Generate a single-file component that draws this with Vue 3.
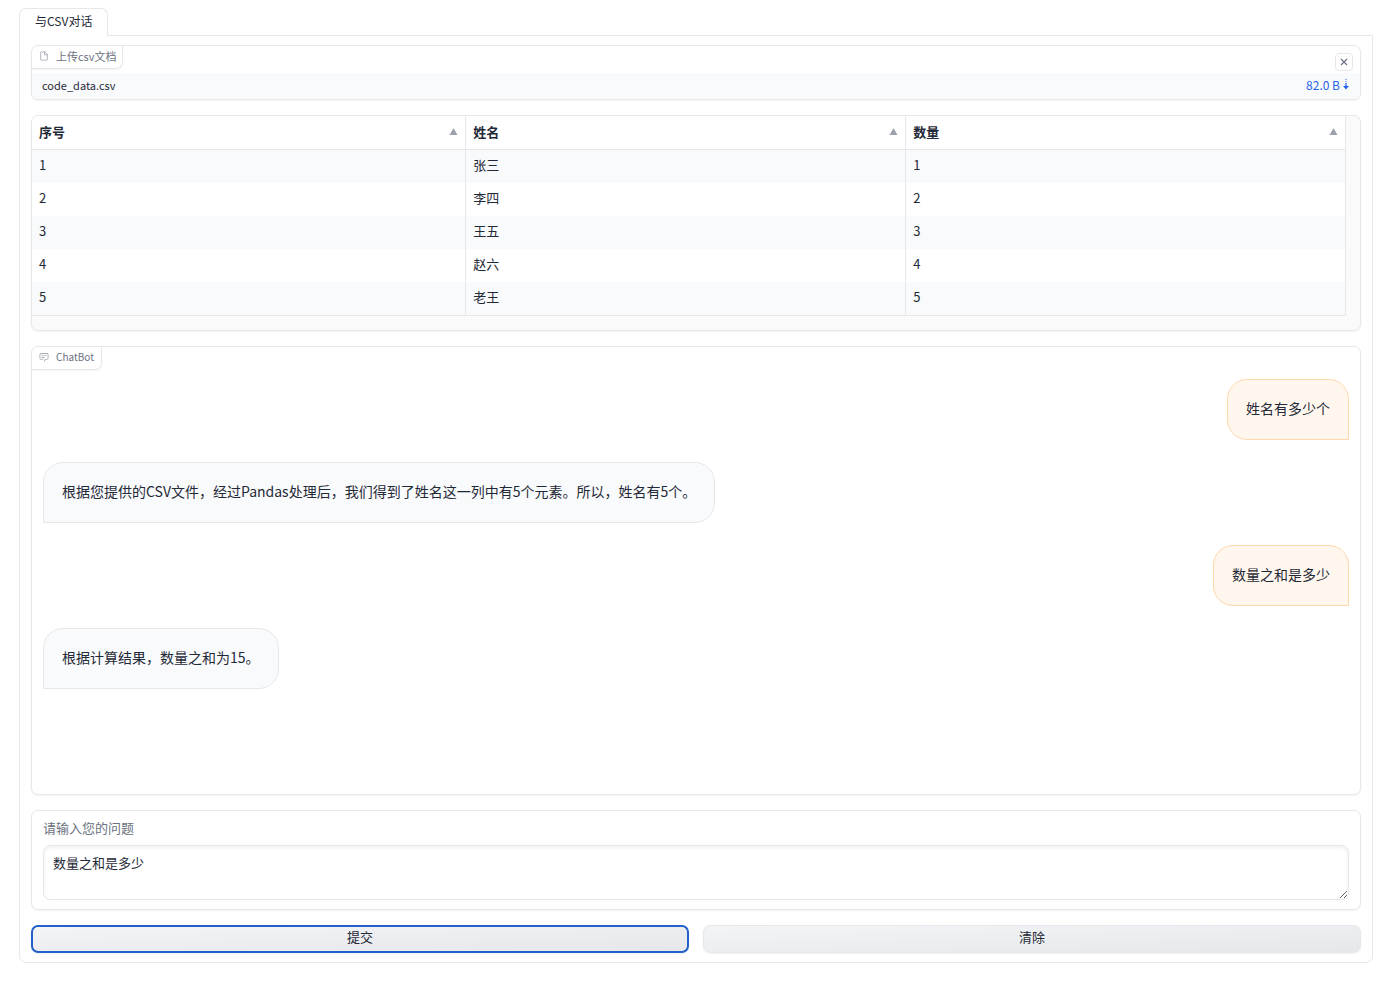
<script setup>
import { ref } from 'vue'

const columns = ['序号', '姓名', '数量']
const rows = [
  ['1', '张三', '1'],
  ['2', '李四', '2'],
  ['3', '王五', '3'],
  ['4', '赵六', '4'],
  ['5', '老王', '5'],
]
const messages = [
  { from: 'user', text: '姓名有多少个' },
  { from: 'bot', text: '根据您提供的CSV文件，经过Pandas处理后，我们得到了姓名这一列中有5个元素。所以，姓名有5个。' },
  { from: 'user', text: '数量之和是多少' },
  { from: 'bot', text: '根据计算结果，数量之和为15。' },
]
const question = ref('数量之和是多少')
</script>

<template>
  <main class="app" lang="zh-CN">
    <nav class="tabs" role="tablist">
      <button class="tab" type="button" role="tab" aria-selected="true">与CSV对话</button>
    </nav>

    <div class="panel" role="tabpanel">
      <section class="block file">
        <div class="file-head">
          <div class="label">
            <svg class="label-icon" viewBox="0 0 24 24" fill="none" stroke="currentColor" stroke-width="1.5" stroke-linecap="round" stroke-linejoin="round">
              <path d="M13 2H6a2 2 0 0 0-2 2v16a2 2 0 0 0 2 2h12a2 2 0 0 0 2-2V9z" />
              <polyline points="13 2 13 9 20 9" />
            </svg>
            <span>上传csv文档</span>
          </div>
          <button class="clear" type="button" aria-label="Clear">
            <svg viewBox="0 0 10 10" fill="none" stroke="currentColor" stroke-width="1.2">
              <path d="M2 2L8 8M8 2L2 8" />
            </svg>
          </button>
        </div>
        <div class="file-row">
          <span class="file-name">code_data.csv</span>
          <a class="download" href="#" download>82.0 B
            <svg viewBox="0 0 6 12" fill="none" stroke="currentColor">
              <path d="M3 0V8" stroke-width="1" stroke-dasharray="1 1" />
              <path d="M3 4V8" stroke-width="1" />
              <path d="M0 7H6L3 10.5Z" fill="currentColor" stroke="none" />
            </svg>
          </a>
        </div>
      </section>

      <section class="block sheet">
        <table>
          <thead>
            <tr>
              <th v-for="c in columns" :key="c" scope="col">
                <div class="th">
                  <span>{{ c }}</span>
                  <svg class="sort" viewBox="0 0 9 7" fill="currentColor"><path d="M4.500 0L8.500 7H0.500Z" /></svg>
                </div>
              </th>
            </tr>
          </thead>
          <tbody>
            <tr v-for="r in rows" :key="r[0]">
              <td v-for="(v, i) in r" :key="i">{{ v }}</td>
            </tr>
          </tbody>
        </table>
      </section>

      <section class="block chat">
        <div class="label">
          <svg class="label-icon" viewBox="0 0 32 32" fill="currentColor">
            <path d="M17.740 30L16 29l4-7h6a2 2 0 0 0 2-2V8a2 2 0 0 0-2-2H6a2 2 0 0 0-2 2v12a2 2 0 0 0 2 2h9v2H6a4 4 0 0 1-4-4V8a4 4 0 0 1 4-4h20a4 4 0 0 1 4 4v12a4 4 0 0 1-4 4h-4.840z" />
            <path d="M8 10h16v2H8zM8 16h10v2H8z" />
          </svg>
          <span>ChatBot</span>
        </div>
        <div class="messages">
          <div v-for="m in messages" :key="m.text" class="message" :class="m.from">{{ m.text }}</div>
        </div>
      </section>

      <section class="block ask">
        <label for="question">请输入您的问题</label>
        <textarea id="question" v-model="question"></textarea>
      </section>

      <div class="actions">
        <button class="action focused" type="button">提交</button>
        <button class="action" type="button">清除</button>
      </div>
    </div>
  </main>
</template>

<style>
body {
  margin: 0;
  background: #fff;
}
</style>

<style scoped>
.app {
  box-sizing: border-box;
  padding: 8px 0 23px 19px;
  color: #1f2937;
  font-family: "Noto Sans CJK SC", sans-serif;
  font-size: 13px;
  line-height: 18px;
}
.app *,
.app *::before {
  box-sizing: border-box;
}
button,
textarea {
  font: inherit;
  color: inherit;
  margin: 0;
}
svg {
  display: block;
  flex: none;
}
.tabs {
  display: flex;
  height: 27px;
}
.tab {
  height: 28px;
  padding: 0 15px 3px;
  border: 1px solid #e5e7eb;
  border-bottom: 0;
  border-radius: 7px 7px 0 0;
  background: #fff;
  font-size: 12px;
  position: relative;
}
.panel {
  display: flex;
  flex-direction: column;
  gap: 15px;
  padding: 9px 11px;
  border: 1px solid #e5e7eb;
  border-radius: 0 0 7px 7px;
}
.block {
  border: 1px solid #e5e7eb;
  border-radius: 7px;
  background: #fff;
  box-shadow: 0 1px 2px rgba(0, 0, 0, 0.05);
  overflow: hidden;
}
.label {
  display: flex;
  align-items: center;
  gap: 7px;
  width: max-content;
  height: 23px;
  padding: 0 7px 2px;
  border: solid #e5e7eb;
  border-width: 0 1px 1px 0;
  border-radius: 0 0 7px 0;
  box-shadow: 0 1px 2px rgba(0, 0, 0, 0.05);
  color: #6b7280;
  font-size: 11px;
}
.chat .label {
  font-size: 10px;
}
.label-icon {
  width: 10px;
  height: 10px;
  opacity: 0.8;
}
.file-head {
  display: flex;
  justify-content: space-between;
  height: 27px;
}
.file .label {
  padding-right: 5px;
}
.clear {
  display: grid;
  place-items: center;
  width: 18px;
  height: 18px;
  margin: 7px 7px 0 0;
  padding: 0;
  border: 1px solid #e5e7eb;
  border-radius: 4px;
  background: #fff;
  color: #6b7280;
  position: relative;
}
.clear svg {
  width: 10px;
  height: 10px;
}
.file-row {
  display: flex;
  align-items: center;
  justify-content: space-between;
  height: 26px;
  padding: 0 11px 2px 10px;
  background: #f9fafb;
  font-size: 12px;
}
.file-name {
  font-size: 11px;
}
.download {
  display: flex;
  align-items: center;
  gap: 3px;
  color: #2563eb;
  text-decoration: none;
}
.download svg {
  width: 6px;
  height: 12px;
}
.sheet {
  padding: 0 14px 14px 0;
  background: #fafafa;
}
table {
  width: 100%;
  table-layout: fixed;
  border-collapse: separate;
  border-spacing: 0;
  border-right: 1px solid #e5e7eb;
  border-bottom: 1px solid #e5e7eb;
  background: #fff;
}
th,
td {
  height: 33px;
  padding: 0 7px 2px;
  text-align: left;
}
th {
  height: 34px;
  border-bottom: 1px solid #e5e7eb;
  font-weight: 700;
}
td {
  padding-bottom: 3px;
}
th:first-child {
  width: 33%;
}
th + th,
td + td {
  border-left: 1px solid #e5e7eb;
}
tbody tr:nth-child(odd) {
  background: #f9fafb;
}
.th {
  display: flex;
  align-items: center;
  justify-content: space-between;
}
.sort {
  width: 9px;
  height: 7px;
  color: #9ca3af;
}
.chat {
  height: 449px;
}
.messages {
  display: flex;
  flex-direction: column;
  gap: 22px;
  padding: 9px 11px;
}
.message {
  padding: 17px 18px 19px;
  border: 1px solid #e5e7eb;
  border-radius: 20px;
  background: #f9fafb;
  font-size: 14px;
  line-height: 23px;
}
.bot {
  align-self: flex-start;
  border-bottom-left-radius: 0;
}
.user {
  align-self: flex-end;
  border-color: #fed7aa;
  border-bottom-right-radius: 0;
  background: #fff7ed;
}
.ask {
  display: flex;
  flex-direction: column;
  gap: 8px;
  padding: 8px 11px 9px;
}
.ask label {
  color: #6b7280;
}
textarea {
  display: block;
  width: 100%;
  height: 55px;
  padding: 8px 9px;
  border: 1px solid #e5e7eb;
  border-radius: 7px;
  background: #fff;
  box-shadow: inset 0 2px 4px rgba(0, 0, 0, 0.06);
  outline: none;
  resize: vertical;
}
.actions {
  display: grid;
  grid-template-columns: 1fr 1fr;
  gap: 14px;
}
.action {
  height: 28px;
  padding: 0 0 4px;
  border: 1px solid #e5e7eb;
  border-radius: 7px;
  background: linear-gradient(to bottom right, #f3f4f6, #e5e7eb);
  box-shadow: 0 1px 2px rgba(0, 0, 0, 0.05);
}
.focused {
  border: 2px solid #245fcb;
}
</style>
